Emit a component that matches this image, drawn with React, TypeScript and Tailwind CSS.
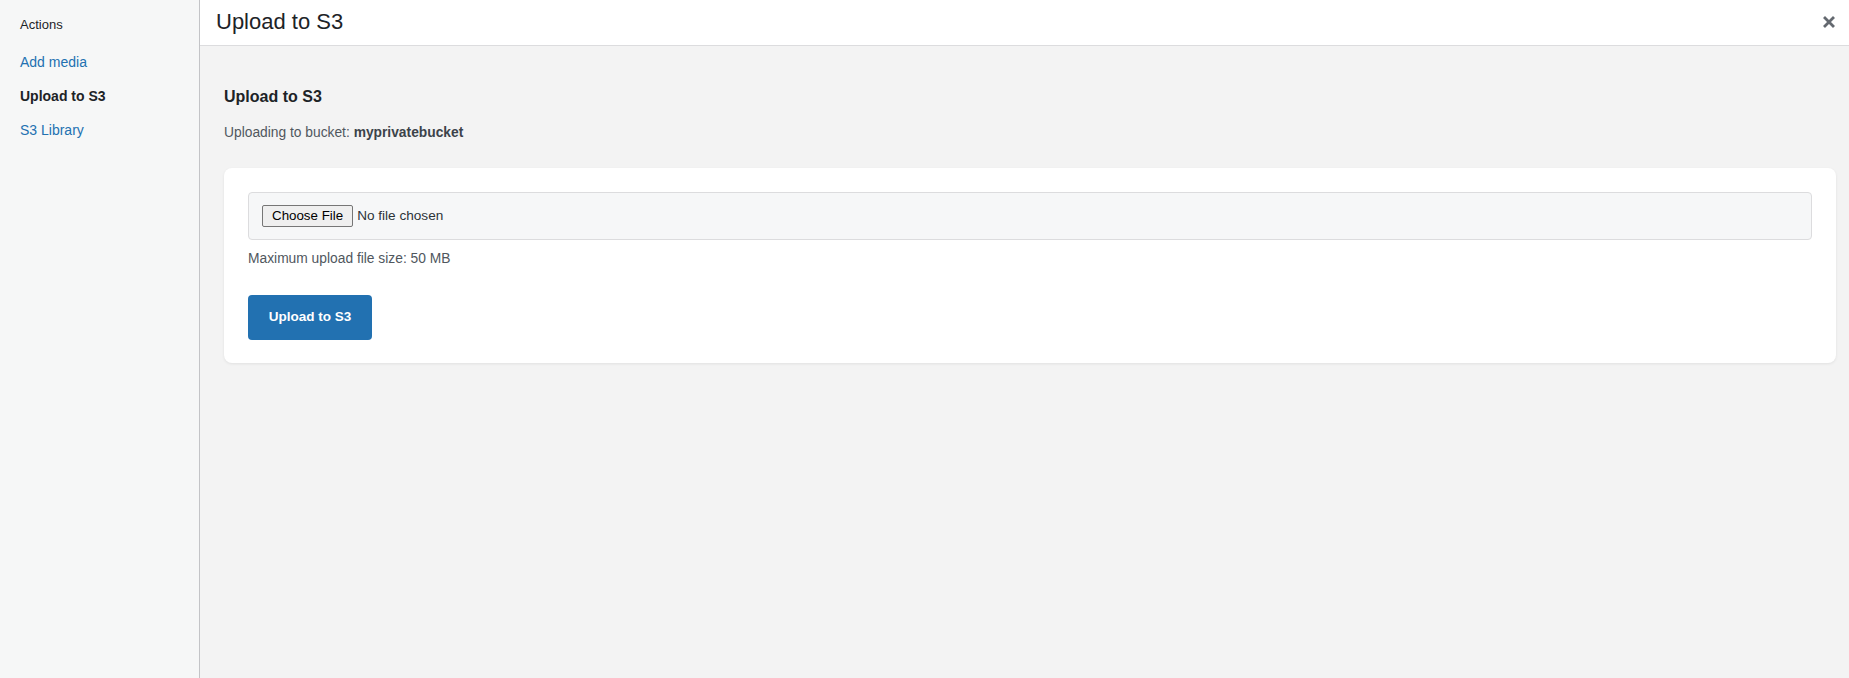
import React from "react";

export default function App() {
  return (
    <div
      className="flex h-[678px] w-[1849px] overflow-hidden bg-[#f3f3f3] text-[#1d2327]"
      style={{ fontFamily: '"Liberation Sans", Arial, sans-serif' }}
    >
      {/* Sidebar */}
      <aside className="w-[200px] shrink-0 border-r border-[#c3c4c7] bg-[#f6f7f7] pl-[20px] pt-[16px]">
        <div className="h-[18px] text-[13px] leading-[18px] text-[#1d2327]">Actions</div>
        <nav className="mt-[11px] flex flex-col">
          <a className="h-[34px] text-[14px] leading-[34px] text-[#2271b1]">Add media</a>
          <a className="h-[34px] text-[14px] font-bold leading-[34px] text-[#1d2327]">Upload to S3</a>
          <a className="h-[34px] text-[14px] leading-[34px] text-[#2271b1]">S3 Library</a>
        </nav>
      </aside>

      {/* Main */}
      <main className="flex min-w-0 flex-1 flex-col">
        <header className="flex h-[46px] shrink-0 items-center justify-between border-b border-[#dcdcde] bg-white pl-[16px] pr-[8px]">
          <h1 className="pb-[2px] text-[22px] leading-[28px] text-[#1d2327]">Upload to S3</h1>
          <button className="flex h-[24px] w-[24px] items-center justify-center pb-[2px]" aria-label="Close">
            <svg width="12" height="12" viewBox="0 0 12 12">
              <path d="M2 2 L10 10 M10 2 L2 10" stroke="#646970" strokeWidth="2.8" strokeLinecap="square" />
            </svg>
          </button>
        </header>

        <div className="pl-[24px] pr-[13px] pt-[41px]">
          <h2 className="text-[16px] font-bold leading-[20px] text-[#1d2327]">Upload to S3</h2>
          <p className="mt-[17px] text-[13.8px] leading-[18px] text-[#50575e]">
            Uploading to bucket: <strong className="font-bold text-[#3c434a]">myprivatebucket</strong>
          </p>

          <div className="mt-[26px] rounded-[8px] bg-white px-6 pb-[23px] pt-[24px] shadow-[0_1px_3px_rgba(0,0,0,0.08)]">
            <div className="flex h-[48px] items-center rounded-[4px] border border-[#dcdcde] bg-[#f6f7f8] pl-[13px]">
              <input
                type="file"
                className="text-[13.6px] leading-[16px] text-[#2c3338] file:mr-[4px] file:h-[22px] file:rounded-[2px] file:border file:border-[#767676] file:bg-[#efefef] file:px-[9px] file:text-[13.33px] file:text-black"
              />
            </div>
            <p className="mt-[10px] text-[13.8px] leading-[18px] text-[#50575e]">Maximum upload file size: 50 MB</p>
            <button className="mt-[27px] flex h-[45px] w-[124px] items-center justify-center rounded-[4px] bg-[#2271b1] text-[13.5px] font-bold text-white">
              Upload to S3
            </button>
          </div>
        </div>
      </main>
    </div>
  );
}
